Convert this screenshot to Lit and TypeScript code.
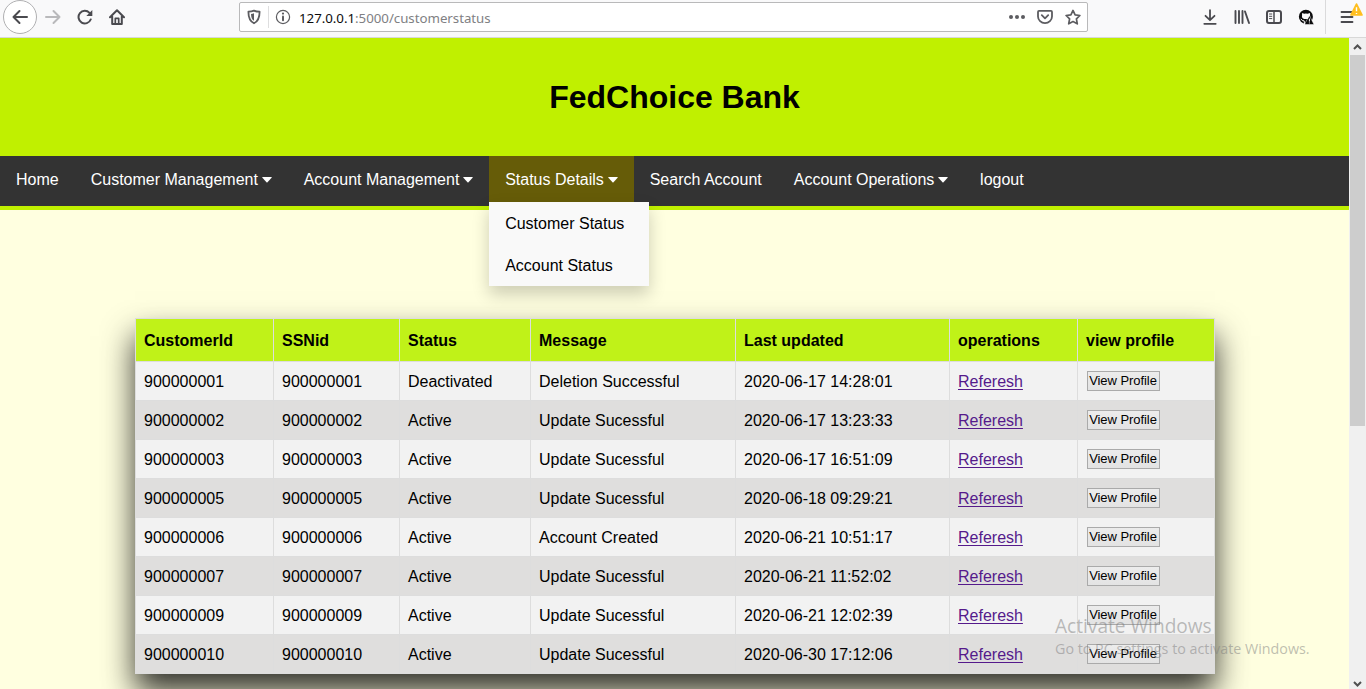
import { LitElement, html, css, svg } from "lit";
import { customElement } from "lit/decorators.js";

const ROWS: string[][] = [
  ["900000001", "900000001", "Deactivated", "Deletion Successful", "2020-06-17 14:28:01"],
  ["900000002", "900000002", "Active", "Update Sucessful", "2020-06-17 13:23:33"],
  ["900000003", "900000003", "Active", "Update Sucessful", "2020-06-17 16:51:09"],
  ["900000005", "900000005", "Active", "Update Sucessful", "2020-06-18 09:29:21"],
  ["900000006", "900000006", "Active", "Account Created", "2020-06-21 10:51:17"],
  ["900000007", "900000007", "Active", "Update Sucessful", "2020-06-21 11:52:02"],
  ["900000009", "900000009", "Active", "Update Sucessful", "2020-06-21 12:02:39"],
  ["900000010", "900000010", "Active", "Update Sucessful", "2020-06-30 17:12:06"],
];
const HEADS = ["CustomerId", "SSNid", "Status", "Message", "Last updated", "operations", "view profile"];

const icon = (body: unknown) =>
  html`<svg width="16" height="16" viewBox="0 0 16 16" fill="none" stroke="currentColor" stroke-width="2" stroke-linecap="round" stroke-linejoin="round">${body}</svg>`;

const caret = html`<svg class="caret" width="10" height="6" viewBox="0 0 10 6"><path d="M.6 0h8.8q.6.2.2.8L5.500 5.300q-.5.4-1 0L.4.8Q0 .2.600 0z" fill="currentColor"/></svg>`;

@customElement("browser-bar")
class BrowserBar extends LitElement {
  static styles = css`
    :host { display: flex; box-sizing: border-box; height: 38px; overflow: hidden; background: #f9f9fa; border-bottom: 1px solid #d8d8d8; color: #4a4a4f; align-items: center; padding: 0 0 3px 3px; font-family: "Noto Sans", sans-serif; }
    :host > * { flex: none; }
    svg { display: block; flex: none; }
    .back { width: 32px; height: 32px; border: 1px solid #b0b0b2; border-radius: 50%; background: #fff; display: grid; place-items: center; }
    .forward { margin-left: 8px; color: #b9b9bb; }
    .reload, .home { margin-left: 16px; }
    .url { box-sizing: border-box; margin-left: 114px; width: 849px; height: 30px; background: #fff; border: 1px solid #b9b9ba; border-radius: 2px; display: flex; align-items: center; padding: 0 6px; color: #5c5c60; }
    .sep { width: 1px; height: 22px; background: #dededf; margin: 0 6px 0 6px; }
    .address { flex: 1; margin-left: 8px; font-size: 13.3px; letter-spacing: -.03px; line-height: 20px; color: #808083; white-space: nowrap; padding-top: 1px; }
    .host { color: #0c0c0d; }
    .actions { display: flex; gap: 12px; }
    .tools { display: flex; gap: 16px; margin-left: 114px; }
    .menu { display: flex; align-items: center; border-left: 1px solid #dadadb; height: 34px; margin-left: 11px; padding-left: 13px; }
    .alert { position: relative; left: -5px; top: -8px; }
  `;
  render() {
    return html`
      <div class="back">${icon(svg`<path d="M15 8H1.500M7.500 2L1.500 8l6 6"/>`)}</div>
      <div class="forward">${icon(svg`<path d="M1 8h13.500M8.500 2l6 6-6 6"/>`)}</div>
      <div class="reload">${icon(svg`<path d="M13.700 10.500A6.300 6.300 0 1 1 12.500 3.900"/><path d="M15.300 1v6H9.300z" fill="currentColor" stroke="none"/>`)}</div>
      <div class="home">${icon(svg`<path d="M1 8.200L8 1.300l7 6.900M3.200 7.500V15h9.600V7.500" /><path d="M6.300 15V9.300h3.400V15" stroke-width="1.700"/>`)}</div>
      <div class="url">
        ${icon(svg`<path d="M8 1.700c2 .8 4 1 5.600 1C13.600 8 12.600 12 8 14.300 3.400 12 2.400 8 2.400 2.700c1.600 0 3.600-.2 5.600-1z" stroke-width="1.800"/><path d="M8 4.300c-1 .4-2 .6-3 .6.1 3.400.9 5.500 3 6.900z" fill="currentColor" stroke="none"/>`)}
        <div class="sep"></div>
        ${icon(svg`<circle cx="8" cy="8" r="6.600" stroke-width="1.200"/><path d="M8 7.500v3.700" stroke-width="2"/><circle cx="8" cy="4.600" r="1.100" fill="currentColor" stroke="none"/>`)}
        <div class="address"><span class="host">127.0.0.1</span>:5000/customerstatus</div>
        <div class="actions">
          ${icon(svg`<g fill="currentColor" stroke="none"><circle cx="2" cy="8" r="2"/><circle cx="8" cy="8" r="2"/><circle cx="14" cy="8" r="2"/></g>`)}
          ${icon(svg`<path d="M2 1.900h12q1 0 1 1V7.500a7 6.600 0 0 1-14 0V2.900q0-1 1-1z" stroke-width="1.800"/><path d="M4.800 6.200L8 9.300l3.200-3.100" stroke-width="1.800"/>`)}
          ${icon(svg`<path d="M8 1.400l2.100 4.400 4.800.7-3.500 3.400.9 4.900L8 12.500l-4.300 2.300.9-4.900L1.100 6.500l4.800-.7z" stroke-width="1.700"/>`)}
        </div>
      </div>
      <div class="tools">
        ${icon(svg`<path d="M8 1.200v9.500M3.500 6.800L8 11.200l4.500-4.400M2.300 14.800h11.400" stroke-width="1.800"/>`)}
        ${icon(svg`<path d="M1.500 2v12M5 2v12M8.500 2v12M11 2.500L15 14" stroke-width="1.900"/>`)}
        ${icon(svg`<rect x="1" y="2" width="14" height="12" rx="2" stroke-width="2"/><path d="M8 2v12" stroke-width="1.500"/><path d="M3.500 5h2.300M3.500 7.300h2.300M3.500 9.600h2.300" stroke-width="1"/>`)}
        ${icon(svg`<circle cx="7.900" cy="7.700" r="7" fill="#0c0c0d" stroke="none"/><path d="M4.300 4l1.800.7q1.700-.5 3.600 0L11.800 4q.5 1 .2 2 1 3-2.200 4H6.300Q3.300 9.400 4.100 6q-.3-1 .2-2z" fill="#f9f9fa" stroke="none"/><path d="M3 10.200q1.200 2 3.200 1.700l.3 2.700" stroke="#f9f9fa" stroke-width="1"/><path d="M11.500 6.800l4.500 8.700H6.800z" fill="#0c0c0d" stroke="#f9f9fa" stroke-width=".5"/><path d="M11.400 10v2.200M11.400 13.900v.1" stroke="#fff" stroke-width="1"/>`)}
      </div>
      <div class="menu">
        ${icon(svg`<path d="M2.500 3h11M2.500 8h11M2.500 13h11" stroke-width="1.800"/>`)}
        <svg class="alert" width="13" height="13" viewBox="0 0 12 12"><path d="M6 1l5 10H1z" fill="#ffbf1f" stroke="#ffbf1f" stroke-width="1.600" stroke-linejoin="round"/><path d="M6 4v3.500M6 9.200v1" stroke="#fff" stroke-width="1.300"/></svg>
      </div>`;
  }
}

@customElement("nav-bar")
class NavBar extends LitElement {
  static styles = css`
    :host { display: flex; box-sizing: border-box; height: 54px; background: #333; border-bottom: 4px solid #c0f000; color: #fff; font: 16px/18px "Liberation Sans", Arial, sans-serif; }
    .item { height: 18px; padding: 15px 16px 13px; white-space: nowrap; position: relative; }
    .active { background: #665c08; }
    .caret { margin: 0 -.2px 0 4px; vertical-align: 2px; }
    .menu { position: absolute; z-index: 2; left: 0; top: 46px; width: 160px; background: #f9f9f9; color: #000; box-shadow: 0 8px 16px rgba(0, 0, 0, .2); }
    .option { padding: 13px 16px 11px; }
  `;
  render() {
    return html`
      <div class="item">Home</div>
      <div class="item">Customer Management${caret}</div>
      <div class="item">Account Management${caret}</div>
      <div class="item active">Status Details${caret}
        <div class="menu"><div class="option">Customer Status</div><div class="option">Account Status</div></div>
      </div>
      <div class="item">Search Account</div>
      <div class="item">Account Operations${caret}</div>
      <div class="item">logout</div>`;
  }
}

@customElement("status-table")
class StatusTable extends LitElement {
  static styles = css`
    :host { display: block; box-sizing: border-box; width: 1080px; border: 1px solid #ddd; border-width: 1px 0 0 1px; box-shadow: 0 18px 30px rgba(0, 0, 0, .8); font: 16px/18px "Liberation Sans", Arial, sans-serif; color: #000; }
    .row { display: grid; grid-template-columns: 138px 126px 131px 205px 214px 128px 137px; height: 39px; background: #f2f2f2; }
    .row:nth-child(odd) { background: #dfdedd; }
    .row.head { height: 43px; background: #c0f218; font-weight: bold; }
    .cell { box-sizing: border-box; border: 1px solid #ddd; border-width: 0 1px 1px 0; padding: 2px 8px 0; display: flex; align-items: center; white-space: nowrap; }
    .link { color: #551a8b; text-decoration: underline; text-underline-offset: 2px; }
    .button { box-sizing: border-box; width: 73px; height: 20px; margin: -2px 0 0 1px; padding: 0 1px 0 0; border: 1px solid #aaa; background: linear-gradient(#ececec, #e3e3e3); font: 13px/16px "Liberation Sans", Arial, sans-serif; letter-spacing: -.06px; color: #000; white-space: nowrap; }
  `;
  render() {
    return html`
      <div class="row head">${HEADS.map((h) => html`<div class="cell">${h}</div>`)}</div>
      ${ROWS.map((r) => html`<div class="row">
        ${r.map((c) => html`<div class="cell">${c}</div>`)}
        <div class="cell"><a class="link">Referesh</a></div>
        <div class="cell"><button class="button">View Profile</button></div>
      </div>`)}`;
  }
}

@customElement("app-root")
class AppRoot extends LitElement {
  static styles = css`
    :host { display: flex; flex-direction: column; height: 689px; overflow: hidden; position: relative; font-family: "Liberation Sans", Arial, sans-serif; }
    .view { display: flex; flex: 1; min-height: 0; }
    .page { width: 1349px; background: #ffffe0; overflow: hidden; }
    .header { height: 118px; background: #c0f000; display: flex; align-items: center; justify-content: center; }
    .title { margin: 0; font-size: 32px; line-height: 38px; font-weight: bold; color: #000; }
    .content { padding: 108px 0 0 135px; }
    .scroll { width: 17px; background: #f0f0f0; display: flex; flex-direction: column; align-items: center; justify-content: space-between; }
    .track { flex: 1; }
    .thumb { width: 15px; height: 371px; background: #cdcdcd; }
    .arrow { display: block; height: 17px; }
    .notice { position: absolute; left: 1055px; top: 614px; color: rgba(125, 125, 125, .5); font-family: "Open Sans", "Noto Sans", sans-serif; white-space: nowrap; z-index: 3; }
    .big { font-size: 19.100px; line-height: 24px; }
    .small { font-size: 14.300px; line-height: 22px; }
  `;
  render() {
    return html`
      <browser-bar></browser-bar>
      <div class="view">
        <div class="page">
          <div class="header"><h1 class="title">FedChoice Bank</h1></div>
          <nav-bar></nav-bar>
          <div class="content"><status-table></status-table></div>
        </div>
        <div class="scroll">
          <svg class="arrow" width="17" height="17" viewBox="0 0 17 17"><path d="M5 11l3.500-3.500L12 11" fill="none" stroke="#505050" stroke-width="2"/></svg>
          <div class="thumb"></div>
          <div class="track"></div>
          <svg class="arrow" width="17" height="17" viewBox="0 0 17 17"><path d="M5 10l3.500 3.500L12 10" fill="none" stroke="#505050" stroke-width="2"/></svg>
        </div>
      </div>
      <div class="notice"><div class="big">Activate Windows</div><div class="small">Go to PC settings to activate Windows.</div></div>`;
  }
}
